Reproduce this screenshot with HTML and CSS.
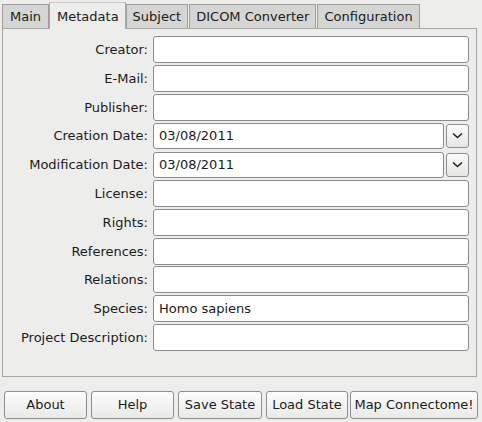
FILE: index.html
```html
<!DOCTYPE html>
<html>
<head>
<meta charset="utf-8">
<link rel="stylesheet" href="styles.css">
</head>
<body>
<div class="window">
  <div class="tabbar">
    <div class="tab">Main</div>
    <div class="tab tab-active">Metadata</div>
    <div class="tab">Subject</div>
    <div class="tab">DICOM Converter</div>
    <div class="tab">Configuration</div>
  </div>
  <div class="panel">
    <div class="form">
      <label class="lbl">Creator:</label>
      <div class="field"><div class="input"></div></div>
      <label class="lbl">E-Mail:</label>
      <div class="field"><div class="input"></div></div>
      <label class="lbl">Publisher:</label>
      <div class="field"><div class="input"></div></div>
      <label class="lbl">Creation Date:</label>
      <div class="field date"><div class="input">03/08/2011</div><div class="drop"><svg width="11" height="7" viewBox="0 0 11 7"><path d="M1 1.5 L5.5 5.5 L10 1.5" fill="none" stroke="#222" stroke-width="1.6"/></svg></div></div>
      <label class="lbl">Modification Date:</label>
      <div class="field date"><div class="input">03/08/2011</div><div class="drop"><svg width="11" height="7" viewBox="0 0 11 7"><path d="M1 1.5 L5.5 5.5 L10 1.5" fill="none" stroke="#222" stroke-width="1.6"/></svg></div></div>
      <label class="lbl">License:</label>
      <div class="field"><div class="input"></div></div>
      <label class="lbl">Rights:</label>
      <div class="field"><div class="input"></div></div>
      <label class="lbl">References:</label>
      <div class="field"><div class="input"></div></div>
      <label class="lbl">Relations:</label>
      <div class="field"><div class="input"></div></div>
      <label class="lbl">Species:</label>
      <div class="field"><div class="input">Homo sapiens</div></div>
      <label class="lbl">Project Description:</label>
      <div class="field"><div class="input"></div></div>
    </div>
  </div>
  <div class="buttons">
    <div class="btn w83">About</div>
    <div class="btn w83">Help</div>
    <div class="btn w84">Save State</div>
    <div class="btn w82">Load State</div>
    <div class="btn w128">Map Connectome!</div>
  </div>
</div>
</body>
</html>
```
FILE: styles.css
```css
html, body {
  margin: 0;
  padding: 0;
  background: #ededec;
}
body {
  width: 482px;
  height: 422px;
  overflow: hidden;
  font-family: "DejaVu Sans", "Liberation Sans", sans-serif;
  font-size: 13px;
  color: #1b1b1b;
}
.window {
  display: flex;
  flex-direction: column;
}
.tabbar {
  display: flex;
  align-items: flex-end;
  height: 28px;
  padding-left: 2px;
}
.tab {
  box-sizing: border-box;
  height: 24px;
  line-height: 23px;
  padding: 0 6px 0 6px;
  border: 1px solid #a0a0a0;
  border-bottom: none;
  background: #d5d5d4;
  margin-right: 1px;
  white-space: nowrap;
}
.tab:first-child {
  margin-right: 0;
  padding: 0 7px 0 7px;
}
.tab-active {
  height: 27px;
  line-height: 27px;
  background: #ededec;
  border-color: #a8a8a8;
  border-top-color: #c6c6c6;
  margin-bottom: -1px;
  position: relative;
  z-index: 1;
  padding: 0 6px 0 7px;
  margin-right: 0;
}
.panel {
  box-sizing: border-box;
  margin: 0 5px 0 2px;
  height: 349px;
  border: 1px solid #a6a6a6;
  background: #ededec;
  padding: 7px 7px 0 0;
}
.form {
  display: grid;
  grid-template-columns: 145px 1fr;
  column-gap: 5px;
  row-gap: 1.8px;
}
.lbl {
  display: flex;
  align-items: center;
  justify-content: flex-end;
  height: 27px;
  white-space: nowrap;
}
.field {
  display: flex;
  align-items: center;
  gap: 2px;
  height: 27px;
}
.input {
  box-sizing: border-box;
  flex: 1;
  height: 27px;
  line-height: 25px;
  padding-left: 5px;
  background: #ffffff;
  border: 1px solid #8c8c8c;
  border-radius: 3px;
}
.date .input {
  height: 26px;
  line-height: 24px;
}
.drop {
  box-sizing: border-box;
  width: 23px;
  height: 24px;
  border: 1px solid #8e8e8e;
  border-radius: 3px;
  background: linear-gradient(#fbfbfb, #e6e6e5);
  display: flex;
  align-items: center;
  justify-content: center;
}
.buttons {
  display: flex;
  gap: 4px;
  padding: 14px 0 0 4px;
}
.btn {
  box-sizing: border-box;
  height: 28px;
  line-height: 26px;
  text-align: center;
  border: 1px solid #8e8e8e;
  border-radius: 3px;
  background: linear-gradient(#fdfdfd, #e9e9e8);
  white-space: nowrap;
}
.w83 { width: 83px; }
.w84 { width: 84px; }
.w82 { width: 82px; margin-right: -2px; }
.w128 { width: 128px; }
```
